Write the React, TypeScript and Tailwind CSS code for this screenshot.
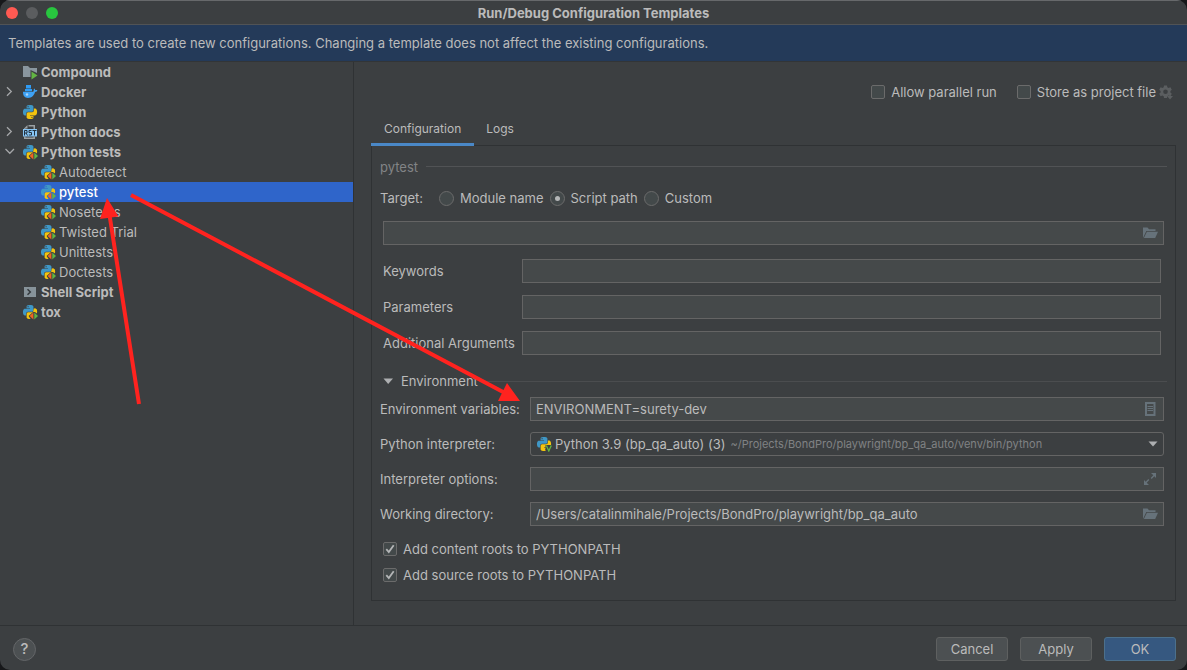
import { useState, type ReactNode } from "react";

type IconName = "compound" | "docker" | "python" | "rst" | "tests" | "shell";

const PY_TOP =
  "M14.25.18l.9.2.73.26.59.3.45.32.34.34.25.34.16.33.1.3.04.26.02.2-.01.13V8.5l-.05.63-.13.55-.21.46-.26.38-.3.31-.33.25-.35.19-.35.14-.33.1-.3.07-.26.04-.21.02H8.77l-.69.05-.59.14-.5.22-.41.27-.33.32-.27.35-.2.36-.15.37-.1.35-.07.32-.04.27-.02.21v3.06H3.17l-.21-.03-.28-.07-.32-.12-.35-.18-.36-.26-.36-.36-.35-.46-.32-.59-.28-.73-.21-.88-.14-1.05-.05-1.23.06-1.22.16-1.04.24-.87.32-.71.36-.57.4-.44.42-.33.42-.24.4-.16.36-.1.32-.05.24-.01h.16l.06.01h8.16v-.83H6.18l-.01-2.75-.02-.37.05-.34.11-.31.17-.28.25-.26.31-.23.38-.2.44-.18.51-.15.58-.12.64-.1.71-.06.77-.04.84-.02 1.27.05zm-6.3 1.98l-.23.33-.08.41.08.41.23.34.33.22.41.09.41-.09.33-.22.23-.34.08-.41-.08-.41-.23-.33-.33-.22-.41-.09-.41.09z";
const PY_BOTTOM =
  "M21.04 6.11l.28.06.32.12.35.18.36.27.36.35.35.47.32.59.28.73.21.88.14 1.04.05 1.23-.06 1.23-.16 1.04-.24.86-.32.71-.36.57-.4.45-.42.33-.42.24-.4.16-.36.09-.32.05-.24.02-.16-.01h-8.22v.82h5.84l.01 2.76.02.36-.05.34-.11.31-.17.29-.25.25-.31.24-.38.2-.44.17-.51.15-.58.13-.64.09-.71.07-.77.04-.84.01-1.27-.04-1.07-.14-.9-.2-.73-.25-.59-.3-.45-.33-.34-.34-.25-.34-.16-.33-.1-.3-.04-.25-.02-.2.01-.13v-5.34l.05-.64.13-.54.21-.46.26-.38.3-.32.33-.24.35-.2.35-.14.33-.1.3-.06.26-.04.21-.02.13-.01h5.84l.69-.05.59-.14.5-.21.41-.28.33-.32.27-.35.2-.36.15-.36.1-.35.07-.32.04-.28.02-.21V6.07h2.09l.14.01zm-6.47 14.25l-.23.33-.08.41.08.41.23.33.33.23.41.08.41-.08.33-.23.23-.33.08-.41-.08-.41-.23-.33-.33-.23-.41-.08-.41.08z";

function PythonMark() {
  return (
    <g transform="translate(1 1) scale(0.585)">
      <path fill="#3f97c6" d={PY_TOP} />
      <path fill="#f3c40f" d={PY_BOTTOM} />
    </g>
  );
}

function TreeIcon({ name, selected }: { name: IconName; selected?: boolean }) {
  const halo = selected ? "#2f65ca" : "#3c3f41";
  return (
    <svg viewBox="0 0 16 16" className="size-4 shrink-0" aria-hidden="true">
      {name === "compound" && (
        <>
          <path fill="#8a969e" d="M1 2h5l2 2h7v5L8.500 6v7H1z" />
          <path fill="#62b543" d="M9.500 7.500l6 4-6 4z" />
        </>
      )}
      {name === "docker" && (
        <>
          <path fill="#2f9bf3" d="M4 1h5v3.500H4z" />
          <path fill="#2f9bf3" d="M3 5h7v2.200H3z" />
          <path
            fill="#3ea2f5"
            d="M1 7.700h9.800c.7-.2 1-.9.900-1.800-.1-.6.1-1.100.500-1.500.7.500 1 1.100 1 1.800.8-.2 1.700-.1 2.200.3-.3 1-1.200 1.400-2.400 1.500-.8 3.300-3.200 5.900-7 5.900C2.700 13.900.8 11.500 1 7.700z"
          />
          <circle cx="5" cy="10.500" r="1.200" fill="#d5ebfd" opacity=".7" />
        </>
      )}
      {name === "python" && <PythonMark />}
      {name === "rst" && (
        <>
          <path fill="#9aa0a3" d="M2 5V4.500L5.500 1v3.500H3.500V5zM6.500 1H13v4h-1.500V2.500h-5z" />
          <path fill="#9aa0a3" d="M2 12.500h1.500v1h8v-1H13V15H2z" />
          <path fill="#86c5f5" d="M1 5h14v7.500H1z" />
          <path
            fill="none"
            stroke="#233240"
            strokeWidth="1"
            d="M2.500 11.500v-5h2.500v2.500H2.500M4 9l1.500 2.500M9.500 6.500h-2.500v2h2.500v2.500H6.800M10.500 6.500h4M12.500 6.500v5"
          />
        </>
      )}
      {name === "tests" && (
        <>
          <PythonMark />
          <path fill={halo} d="M11.900 7.200L17 11v5.500H9.500L6.600 12z" />
          <path fill="#f3c40f" d="M11.800 4.700h2c.9.300 1.300 1.400 1.300 3.300h-3.900z" />
          <path fill="#f26522" d="M11.400 8.500v7L7.600 12z" />
          <path fill="#62b543" d="M12.300 8.500v7L16 12z" />
        </>
      )}
      {name === "shell" && (
        <>
          <path fill="#87939a" d="M2 3h12v10H2z" />
          <path fill="none" stroke="#33393d" strokeWidth="1.500" d="M5.500 5.300L8.300 8l-2.800 2.700" />
        </>
      )}
    </svg>
  );
}

interface Node {
  label: string;
  icon: IconName;
  state?: "open" | "closed";
  children?: string[];
}

const TREE: Node[] = [
  { label: "Compound", icon: "compound" },
  { label: "Docker", icon: "docker", state: "closed" },
  { label: "Python", icon: "python" },
  { label: "Python docs", icon: "rst", state: "closed" },
  {
    label: "Python tests",
    icon: "tests",
    state: "open",
    children: ["Autodetect", "pytest", "Nosetests", "Twisted Trial", "Unittests", "Doctests"],
  },
  { label: "Shell Script", icon: "shell" },
  { label: "tox", icon: "tests" },
];

function Sidebar() {
  const [selected, setSelected] = useState("pytest");
  return (
    <nav aria-label="Templates" className="w-[354px] shrink-0 border-r border-[#2f3234]">
      <ul>
        {TREE.map((node) => (
          <li key={node.label}>
            <button
              type="button"
              aria-expanded={node.state ? node.state === "open" : undefined}
              className="flex h-5 w-full items-center pl-1 text-left font-bold"
            >
              <svg viewBox="0 0 12 12" className="mr-1.5 size-3 shrink-0" aria-hidden="true">
                {node.state && (
                  <path
                    fill="none"
                    stroke="#a4a6a8"
                    strokeWidth="1.300"
                    d={node.state === "open" ? "M1.500 3L5.800 7.300 10 3" : "M3 1.200L7.300 5.500 3 9.800"}
                  />
                )}
              </svg>
              <TreeIcon name={node.icon} />
              <span className="ml-[3px]">{node.label}</span>
            </button>
            {node.children && (
              <ul>
                {node.children.map((child) => (
                  <li key={child}>
                    <button
                      type="button"
                      onClick={() => setSelected(child)}
                      className={
                        child === selected
                          ? "flex h-5 w-full items-center bg-[#2f65ca] pl-10 text-left font-medium text-white"
                          : "flex h-5 w-full items-center pl-10 text-left"
                      }
                    >
                      <TreeIcon name="tests" selected={child === selected} />
                      <span className="ml-[3px]">{child}</span>
                    </button>
                  </li>
                ))}
              </ul>
            )}
          </li>
        ))}
      </ul>
    </nav>
  );
}

function CheckBox({ label, checked }: { label: string; checked?: boolean }) {
  return (
    <label className="flex items-center gap-1.5">
      <span className="grid">
        <input
          type="checkbox"
          defaultChecked={checked}
          className="peer col-start-1 row-start-1 size-3.5 appearance-none rounded-[2px] border border-[#6b6b6b] bg-[#43494a]"
        />
        <svg
          viewBox="0 0 14 14"
          aria-hidden="true"
          className="pointer-events-none invisible col-start-1 row-start-1 size-3.5 peer-checked:visible"
        >
          <path fill="none" stroke="#b4b6b7" strokeWidth="1.800" d="M3.300 7.200l2.500 2.800L10.700 3.300" />
        </svg>
      </span>
      {label}
    </label>
  );
}

function Radio({ label, checked }: { label: string; checked?: boolean }) {
  return (
    <label className="flex items-center gap-1.5">
      <input
        type="radio"
        name="target"
        defaultChecked={checked}
        className="grid size-[15px] appearance-none place-items-center rounded-full border border-[#6b6b6b] bg-[#43494a] before:size-[5px] before:rounded-full checked:before:bg-[#b4b6b7]"
      />
      {label}
    </label>
  );
}

function Field({ id, value, label, children }: { id: string; value?: string; label?: string; children?: ReactNode }) {
  return (
    <div className="flex h-6 min-w-0 flex-1 items-center border border-[#646464] bg-[#45494a]">
      <input
        id={id}
        aria-label={label}
        type="text"
        defaultValue={value}
        className="h-full min-w-0 flex-1 bg-transparent px-[5px] outline-none"
      />
      {children && <span className="mr-[5px] shrink-0">{children}</span>}
    </div>
  );
}

function FolderIcon() {
  return (
    <svg viewBox="0 0 16 16" className="size-4" aria-hidden="true">
      <path fill="#66727a" d="M1 13V2.500h4.500L7 4.300h6.500v1.600H4.300L1 13z" />
      <path fill="#66727a" d="M4.900 6.800H16L13.200 13H1.900z" />
    </svg>
  );
}

function ListIcon() {
  return (
    <svg viewBox="0 0 16 16" className="size-4" aria-hidden="true">
      <path fill="none" stroke="#66727a" strokeWidth="2" d="M4 2h8.500v12H4z" />
      <path stroke="#66727a" d="M5.500 5.500h5.500M5.500 7.500h5.500M5.500 9.500h5.500" />
    </svg>
  );
}

function ExpandIcon() {
  return (
    <svg viewBox="0 0 16 16" className="size-4" aria-hidden="true">
      <path fill="#66727a" d="M9 2h5v5l-1.700-1.700-2.600 2.600-1-1 2.600-2.600zM2 9l1.700 1.700 2.600-2.600 1 1-2.600 2.600L7 14H2z" />
    </svg>
  );
}

function GearIcon() {
  return (
    <svg viewBox="0 0 16 16" className="size-4" aria-hidden="true">
      <g fill="#5b5e60">
        <path
          fillRule="evenodd"
          d="M6 1.500h3l.3 1.800 1.300.700 1.800-.7 1.400 2.500-1.400 1.200v1.500l1.400 1.200-1.400 2.500-1.800-.7-1.300.8-.3 1.700H6l-.3-1.700-1.300-.8-1.800.7-1.400-2.500L2.600 8.500V7L1.200 5.800l1.400-2.500 1.800.7 1.300-.7zM7.500 5.500a2.300 2.300 0 100 4.600 2.300 2.300 0 000-4.600z"
        />
        <path d="M9 12h6l-3 3.500z" />
      </g>
    </svg>
  );
}

function ConfigPanel() {
  return (
    <form className="flex-1 border border-[#2f3234] px-2 pb-[15px]">
      <div className="flex h-[41px] items-center gap-2">
        <span className="text-[#828486]">pytest</span>
        <span className="h-px flex-1 bg-[#515355]" />
      </div>
      <div role="radiogroup" aria-label="Target" className="flex h-[22px] items-center">
        <span className="w-[59px]">Target:</span>
        <div className="flex gap-1.5">
          <Radio label="Module name" />
          <Radio label="Script path" checked />
          <Radio label="Custom" />
        </div>
      </div>
      <div className="mt-3 flex px-[3px]">
        <Field id="script" label="Script path">
          <FolderIcon />
        </Field>
      </div>
      <div className="mt-3.5 flex flex-col gap-3 pr-1.5 pl-[3px]">
        {["Keywords", "Parameters", "Additional Arguments"].map((name) => (
          <div key={name} className="flex items-center">
            <label htmlFor={name} className="w-[139px] shrink-0 whitespace-nowrap">
              {name}
            </label>
            <Field id={name} />
          </div>
        ))}
      </div>
      <div className="mt-4 flex h-5 items-center">
        <button type="button" aria-expanded="true" className="flex items-center gap-1">
          <svg viewBox="0 0 17 16" className="h-4 w-[17px]" aria-hidden="true">
            <path fill="#adafb1" d="M3.500 5.500h9.500L8.200 11z" />
          </svg>
          Environment
        </button>
        <span className="ml-2 h-px flex-1 bg-[#4b4d4f]" />
      </div>
      <div className="mt-1.5 flex flex-col gap-[11px] pr-[3px]">
        <div className="flex items-center">
          <label htmlFor="vars" className="w-[150px] shrink-0">
            Environment variables:
          </label>
          <Field id="vars" value="ENVIRONMENT=surety-dev">
            <ListIcon />
          </Field>
        </div>
        <div className="flex items-center">
          <label htmlFor="interpreter" className="w-[150px] shrink-0">
            Python interpreter:
          </label>
          <div className="flex h-6 min-w-0 flex-1 items-center rounded-[3px] border border-[#646464] px-[5px]">
            <svg viewBox="0 0 16 16" className="size-4 shrink-0" aria-hidden="true">
              <PythonMark />
              <path fill="#3c3f41" d="M9.500 9H16v7H9.500z" />
              <path fill="none" stroke="#62b543" strokeWidth="1.300" d="M10.300 9.500l2.500 5.500 2.500-5.500" />
            </svg>
            <select id="interpreter" className="ml-[3px] appearance-none bg-transparent outline-none field-sizing-content">
              <option>Python 3.9 (bp_qa_auto) (3)</option>
            </select>
            <span className="ml-[5px] truncate text-[11px] text-[#808284]">
              ~/Projects/BondPro/playwright/bp_qa_auto/venv/bin/python
            </span>
            <svg viewBox="0 0 10 6" className="ml-auto h-1.5 w-2.5 shrink-0" aria-hidden="true">
              <path fill="#adafb1" d="M.5.5h9L5 5.500z" />
            </svg>
          </div>
        </div>
        <div className="flex items-center">
          <label htmlFor="options" className="w-[150px] shrink-0">
            Interpreter options:
          </label>
          <Field id="options">
            <ExpandIcon />
          </Field>
        </div>
        <div className="flex items-center">
          <label htmlFor="workdir" className="w-[150px] shrink-0">
            Working directory:
          </label>
          <Field id="workdir" value="/Users/catalinmihale/Projects/BondPro/playwright/bp_qa_auto">
            <FolderIcon />
          </Field>
        </div>
      </div>
      <div className="mt-[13px] flex flex-col items-start gap-1.5 pl-[3px]">
        <CheckBox label="Add content roots to PYTHONPATH" checked />
        <CheckBox label="Add source roots to PYTHONPATH" checked />
      </div>
    </form>
  );
}

function Arrows() {
  return (
    <svg
      width="530"
      height="410"
      viewBox="0 0 530 410"
      className="pointer-events-none absolute top-0 left-0"
      aria-hidden="true"
    >
      <g stroke="#ff231f" strokeWidth="4" fill="#ff231f">
        <path d="M131 195L505 393M139 404L109.500 215" />
        <path stroke="none" d="M520 401L507 383 498 401zM107 198L100 219 118.500 216.500z" />
      </g>
    </svg>
  );
}

export default function App() {
  return (
    <div className="bg-[#17181a]">
      <div className="relative flex min-h-screen flex-col overflow-hidden rounded-[10px] bg-[#3c3f41] font-[Inter,sans-serif] text-[13px] leading-5 text-[#bbbbbb]">
        <header className="flex h-[25px] items-center border-t border-b border-t-[#67696b] border-b-[#515355] px-1.5 pt-px">
          <div className="flex flex-1 gap-2">
            <button type="button" aria-label="Close" className="size-3 rounded-full bg-[#ff5a52]" />
            <button type="button" aria-label="Minimize" className="size-3 rounded-full bg-[#5b5d5f]" />
            <button type="button" aria-label="Zoom" className="size-3 rounded-full bg-[#28c63f]" />
          </div>
          <h1 className="font-bold">Run/Debug Configuration Templates</h1>
          <div className="flex-1" />
        </header>
        <p className="border-b border-[#323537] bg-[#243a59] px-2 py-2">
          Templates are used to create new configurations. Changing a template does not affect the existing configurations.
        </p>
        <div className="flex flex-1">
          <Sidebar />
          <main className="flex min-w-0 flex-1 flex-col pr-[11px] pb-6 pl-[17px]">
            <div className="mt-5 flex h-5 items-center justify-end gap-5 pr-0.5">
              <CheckBox label="Allow parallel run" />
              <div className="flex items-center gap-0.5">
                <CheckBox label="Store as project file" />
                <button type="button" aria-label="Storage options">
                  <GearIcon />
                </button>
              </div>
            </div>
            <div role="tablist" className="relative mt-2.5 -mb-px flex text-[12px]">
              <button
                type="button"
                role="tab"
                aria-selected="true"
                className="h-[34px] border-b-3 border-[#4a88c7] px-[13px] pt-0.5"
              >
                Configuration
              </button>
              <button
                type="button"
                role="tab"
                aria-selected="false"
                className="h-[34px] border-b-3 border-transparent px-3 pt-0.5"
              >
                Logs
              </button>
            </div>
            <ConfigPanel />
          </main>
        </div>
        <footer className="flex h-[45px] items-center gap-3 border-t border-[#2f3234] px-[11px] pt-0.5">
          <button
            type="button"
            aria-label="Help"
            className="mr-auto ml-0.5 size-[23px] rounded-full border border-[#646668] bg-[#4c5052] text-[15px] leading-5 font-medium"
          >
            ?
          </button>
          <button type="button" className="h-6 w-18 rounded-[3px] border border-[#5e6060] bg-[#4c5052]">
            Cancel
          </button>
          <button type="button" className="h-6 w-18 rounded-[3px] border border-[#5e6060] bg-[#4c5052]">
            Apply
          </button>
          <button type="button" className="h-6 w-18 rounded-[3px] border border-[#4c708c] bg-[#365880]">
            OK
          </button>
        </footer>
        <Arrows />
      </div>
    </div>
  );
}
